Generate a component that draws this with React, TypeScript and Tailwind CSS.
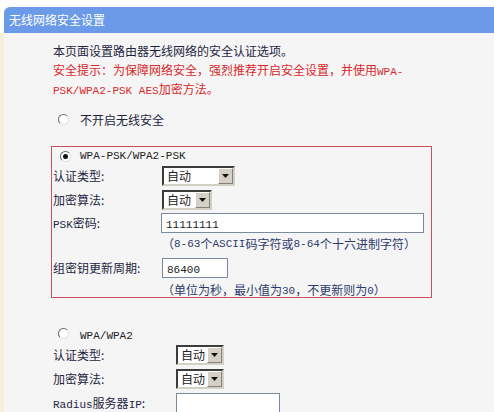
import React from "react";

const cjk = "font-['Noto_Sans_CJK_SC',sans-serif]";
const mono = "font-['Liberation_Mono','Noto_Sans_CJK_SC',monospace] text-[11px] leading-none";

function L({ children }: { children: React.ReactNode }) {
  return <span className={mono}>{children}</span>;
}

function Radio({ checked }: { checked?: boolean }) {
  return (
    <span className="relative inline-flex w-[11px] h-[11px] rounded-full border border-t-[#6a6a6a] border-l-[#6a6a6a] border-r-[#e2e2e2] border-b-[#e2e2e2] bg-white items-center justify-center shrink-0">
      {checked && <span className="w-[5px] h-[5px] rounded-full bg-[#111]" />}
    </span>
  );
}

function Select({ width }: { width: number }) {
  return (
    <div
      className="flex h-[20px] border-2 border-t-[#3c3c3c] border-l-[#3c3c3c] border-r-[#d4d0c8] border-b-[#d4d0c8] bg-white"
      style={{ width }}
    >
      <span className="flex-1 pl-[3px] leading-[16px] text-[12px] text-[#222]">自动</span>
      <span className="w-[15px] h-[16px] bg-[#d4d0c8] border border-t-white border-l-white border-r-[#808080] border-b-[#808080] flex items-center justify-center">
        <svg width="7" height="4" viewBox="0 0 7 4">
          <polygon points="0,0 7,0 3.5,4" fill="#111" />
        </svg>
      </span>
    </div>
  );
}

function Input({ width, value }: { width: number; value?: string }) {
  return (
    <div
      className="h-[20px] border border-[#7c8aa0] bg-white pl-[4px] leading-[18px] text-[#222]"
      style={{ width }}
    >
      {value && <L>{value}</L>}
    </div>
  );
}

function Row({
  label,
  labelWidth,
  height,
  children,
}: {
  label: React.ReactNode;
  labelWidth: number;
  height: number;
  children: React.ReactNode;
}) {
  return (
    <div className="flex items-center" style={{ height }}>
      <span className="shrink-0" style={{ width: labelWidth }}>
        {label}
      </span>
      {children}
    </div>
  );
}

export default function App() {
  return (
    <div className={`w-[494px] h-[412px] overflow-hidden bg-white pt-[7px] text-[12px] text-[#1f2540] ${cjk}`}>
      {/* Title bar */}
      <div className="ml-[4px] h-[26px] rounded-tl-[6px] bg-[#6b9be8] pl-[5px] leading-[26px] text-white">
        无线网络安全设置
      </div>

      {/* Body */}
      <div className="h-[400px] border-l-4 border-[#f4efd9] bg-[#f5f5f5] pl-[49px] pt-[8px]">
        <div className="leading-[19px]">
          <div className="h-[19px]">本页面设置路由器无线网络的安全认证选项。</div>
          <div className="text-[#d8282c]">
            <div className="h-[19px]">
              安全提示：为保障网络安全，强烈推荐开启安全设置，并使用<L>WPA-</L>
            </div>
            <div className="h-[19px]">
              <L>PSK/WPA2-PSK AES</L>加密方法。
            </div>
          </div>
        </div>

        <div className="mt-[12px] flex h-[19px] items-center">
          <span className="ml-[5px]">
            <Radio />
          </span>
          <span className="ml-[11px]">不开启无线安全</span>
        </div>

        {/* WPA-PSK box */}
        <div className="mt-[17px] -ml-[2px] w-[381px] border border-[#c9505e] pl-[1px]">
          <div className="flex h-[13px] items-center">
            <span className="ml-[7px]">
              <Radio checked />
            </span>
            <span className="ml-[9px] text-[#222]">
              <L>WPA-PSK/WPA2-PSK</L>
            </span>
          </div>
          <div className="mt-[4px]">
            <Row label="认证类型:" labelWidth={109} height={24}>
              <Select width={73} />
            </Row>
            <Row label="加密算法:" labelWidth={109} height={24}>
              <Select width={50} />
            </Row>
            <Row label={<><L>PSK</L>密码:</>} labelWidth={108} height={22}>
              <Input width={263} value="11111111" />
            </Row>
            <div className="flex h-[20px] items-center pl-[109px] text-[#2d3a6c]">
              （<L>8-63</L>个<L>ASCII</L>码字符或<L>8-64</L>个十六进制字符）
            </div>
            <Row label="组密钥更新周期:" labelWidth={109} height={28}>
              <Input width={66} value="86400" />
            </Row>
            <div className="flex h-[15px] items-end pl-[109px] leading-[14px] text-[#2d3a6c]">
              （单位为秒，最小值为<L>30</L>，不更新则为<L>0</L>）
            </div>
          </div>
        </div>

        {/* WPA/WPA2 */}
        <div className="mt-[26px] flex h-[19px] items-center">
          <span className="ml-[5px]">
            <Radio />
          </span>
          <span className="ml-[11px] text-[#222]">
            <L>WPA/WPA2</L>
          </span>
        </div>
        <Row label="认证类型:" labelWidth={123} height={24}>
          <Select width={48} />
        </Row>
        <Row label="加密算法:" labelWidth={123} height={24}>
          <Select width={48} />
        </Row>
        <Row label={<><L>Radius</L>服务器<L>IP</L>:</>} labelWidth={123} height={24}>
          <Input width={104} />
        </Row>
      </div>
    </div>
  );
}
